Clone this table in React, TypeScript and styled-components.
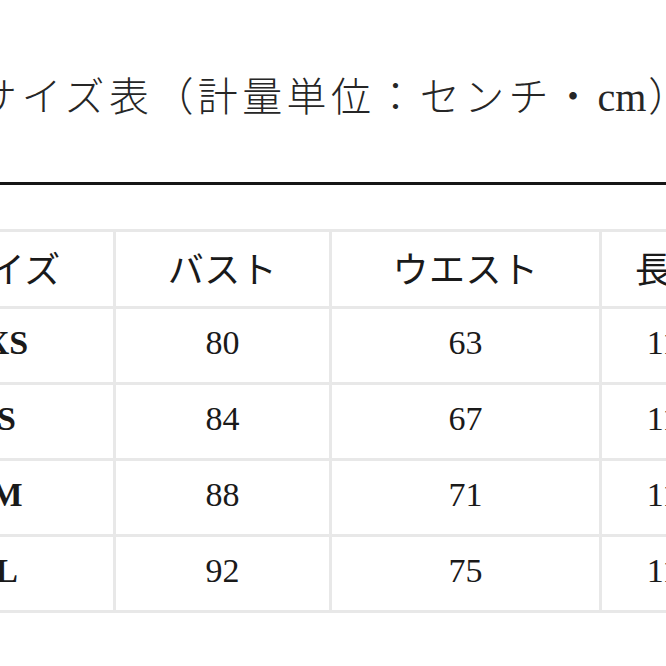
import styled, { createGlobalStyle } from "styled-components";

const GlobalStyle = createGlobalStyle`
  html, body {
    margin: 0;
    padding: 0;
    background: #ffffff;
  }
`;

const Page = styled.div`
  width: 666px;
  height: 666px;
  overflow: hidden;
  background: #ffffff;
  color: #1c1c1c;
`;

const Sheet = styled.div`
  margin-left: -103px;
  width: 900px;
  padding-top: 78px;
  display: flex;
  flex-direction: column;
`;

const Title = styled.h1`
  margin: 0;
  padding-left: 80px;
  font-family: "Liberation Serif", "Noto Sans CJK JP", serif;
  font-weight: 300;
  font-size: 40px;
  line-height: 40px;
  letter-spacing: 4.4px;
  color: #262626;
  white-space: nowrap;
`;

const Unit = styled.span`
  letter-spacing: 0;
  margin-right: 2px;
`;

const Rule = styled.hr`
  margin: 64px 0 0;
  border: none;
  height: 3px;
  background: #161616;
  width: 900px;
`;

const Table = styled.table`
  margin-top: 44px;
  border-collapse: collapse;
  table-layout: fixed;
  width: 844px;
`;

const Col = styled.col<{ $w: number }>`
  width: ${(p) => p.$w}px;
`;

const HeadCell = styled.th`
  height: 70px;
  border: 3px solid #e8e8e8;
  padding: 0 0 4px;
  font-family: "Liberation Serif", "Noto Sans CJK JP", serif;
  font-weight: 400;
  font-size: 36px;
  letter-spacing: 0.5px;
  color: #1a1a1a;
  text-align: center;
  white-space: nowrap;
`;

const Cell = styled.td<{ $bold?: boolean }>`
  height: 67px;
  border: 3px solid #e8e8e8;
  padding: 0 0 6px;
  font-family: "Liberation Serif", serif;
  font-weight: ${(p) => (p.$bold ? 700 : 400)};
  font-size: 34px;
  color: #1a1a1a;
  text-align: center;
  white-space: nowrap;
`;

const headers = ["サイズ", "バスト", "ウエスト", "長さ"];

const rows = [
  { size: "XS", bust: "80", waist: "63", length: "110" },
  { size: "S", bust: "84", waist: "67", length: "112" },
  { size: "M", bust: "88", waist: "71", length: "114" },
  { size: "L", bust: "92", waist: "75", length: "116" },
];

export default function App() {
  return (
    <Page>
      <GlobalStyle />
      <Sheet>
        <Title>
          サイズ表（計量単位：センチ・<Unit>cm</Unit>）
        </Title>
        <Rule />
        <Table>
          <colgroup>
            <Col $w={216} />
            <Col $w={216} />
            <Col $w={270} />
            <Col $w={142} />
          </colgroup>
          <thead>
            <tr>
              {headers.map((h) => (
                <HeadCell key={h}>{h}</HeadCell>
              ))}
            </tr>
          </thead>
          <tbody>
            {rows.map((r) => (
              <tr key={r.size}>
                <Cell $bold>{r.size}</Cell>
                <Cell>{r.bust}</Cell>
                <Cell>{r.waist}</Cell>
                <Cell>{r.length}</Cell>
              </tr>
            ))}
          </tbody>
        </Table>
      </Sheet>
    </Page>
  );
}
